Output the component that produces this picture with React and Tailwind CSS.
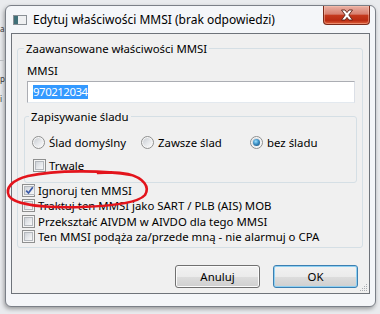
import React from "react";

const CheckBox = ({ checked }) => (
  <span className="w-[13px] h-[13px] shrink-0 border border-[#8e8f8f] bg-[#f4f4f4] p-[1px] flex">
    <span className="flex-1 border border-[#b4b8bd] bg-[linear-gradient(135deg,#cfd3d8_0%,#e9ebee_60%,#f8f8f8_100%)] flex items-center justify-center">
      {checked && (
        <svg width="9" height="9" viewBox="0 0 9 9">
          <path d="M1.2 4.6 L3.5 7 L7.8 1.3" fill="none" stroke="#3b5aa6" strokeWidth="1.7" />
        </svg>
      )}
    </span>
  </span>
);

const Radio = ({ selected }) => (
  <span className="w-[13px] h-[13px] shrink-0 rounded-full border border-[#8e8f8f] bg-[#f6f6f6] p-[1px] flex">
    <span className="flex-1 rounded-full bg-[linear-gradient(135deg,#c9cdd2_0%,#e6e8eb_55%,#fbfbfb_100%)] flex items-center justify-center">
      {selected && (
        <span className="w-[7px] h-[7px] rounded-full bg-[radial-gradient(circle_at_40%_35%,#9be0ff_0%,#3c8fc4_45%,#17466e_100%)]" />
      )}
    </span>
  </span>
);

const Row = ({ children, className = "" }) => (
  <div className={"flex items-center h-[15px] leading-[14px] " + className}>{children}</div>
);

export default function App() {
  return (
    <div className="w-[380px] h-[314px] overflow-hidden relative bg-[#e9ebee] pl-[5px] pt-[5px] font-['Noto_Sans',sans-serif] text-[12px] text-black">
      {/* desktop fragments behind the window */}
      <span className="absolute left-0 top-[25px] text-[8px] leading-[8px] text-[#333]">a</span>
      <span className="absolute left-0 top-[75px] text-[8px] leading-[8px] text-[#333]">p</span>
      <span className="absolute left-0 top-[95px] text-[8px] leading-[8px] text-[#333]">i</span>
      <span className="absolute left-0 top-[60px] w-[5px] h-px bg-[#b9bcc0]" />

      {/* window */}
      <div className="w-[371px] h-[302px] flex flex-col border border-[#7b8088] rounded-[6px] bg-[#f4f6f9] shadow-[-1px_2px_4px_rgba(0,0,0,0.35)]">
        {/* title bar */}
        <div className="h-[27px] flex items-start shrink-0">
          <div className="ml-[7px] mt-[9px] w-[14px] h-[10px] border border-[#8a9096] bg-[#eef0f2] flex">
            <span className="w-[4px] h-full bg-[#3f6f78]" />
          </div>
          <div className="ml-[6px] mt-[6px] leading-[15px] whitespace-nowrap">
            Edytuj właściwości MMSI (brak odpowiedzi)
          </div>
          <div className="ml-auto mr-[5px] w-[47px] h-[19px] rounded-b-[4px] border border-t-0 border-[#7a2a1a] bg-[linear-gradient(#eab0a3_0%,#d88070_45%,#c4391d_52%,#b92b12_80%,#e0603a_100%)] flex items-center justify-center shadow-[inset_0_0_0_1px_rgba(255,200,180,0.45)]">
            <svg width="14" height="12" viewBox="0 0 14 12">
              <path
                d="M1.5 1 H5 L7 3.6 L9 1 H12.5 L8.8 6 L12.5 11 H9 L7 8.4 L5 11 H1.5 L5.2 6 Z"
                fill="#ffffff"
                stroke="#5a1e12"
                strokeWidth="0.9"
              />
            </svg>
          </div>
        </div>

        {/* client area */}
        <div className="mx-[5px] h-[261px] shrink-0 border border-[#6e737a] bg-[#f0f0f0] flex flex-col relative text-[11.4px]">
          <fieldset className="ml-[5px] mt-[7px] w-[346px] border border-[#d5dfe5] rounded-[3px] pb-[3px]">
            <legend className="ml-[6px] px-[2px] leading-[15px]">Zaawansowane właściwości MMSI</legend>
            <div className="ml-[9px] mt-[7px] leading-[15px]">MMSI</div>
            <div className="ml-[9px] mt-[3px] w-[328px] h-[22px] border border-[#abadb3] border-b-[#e3e9ef] border-r-[#dbdfe6] bg-white flex items-center pl-[5px]">
              <span className="bg-[#3399ff] text-white leading-[14px] tracking-[-0.45px]">970212034</span>
            </div>

            <fieldset className="ml-[6px] mt-[6px] w-[333px] border border-[#d5dfe5] rounded-[3px] pb-[9px]">
              <legend className="ml-[4px] px-[2px] leading-[15px]">Zapisywanie śladu</legend>
              <Row className="mt-[11px] pl-[7px]">
                <div className="w-[109px] flex items-center">
                  <Radio />
                  <span className="ml-[4px]">Ślad domyślny</span>
                </div>
                <div className="w-[109px] flex items-center">
                  <Radio />
                  <span className="ml-[4px]">Zawsze ślad</span>
                </div>
                <div className="flex items-center">
                  <Radio selected />
                  <span className="ml-[4px]">bez śladu</span>
                </div>
              </Row>
              <Row className="mt-[8px] pl-[8px]">
                <CheckBox />
                <span className="ml-[3px]">Trwale</span>
              </Row>
            </fieldset>

            <div className="ml-[4px] flex flex-col">
              <Row>
                <CheckBox checked />
                <span className="ml-[3px]">Ignoruj ten MMSI</span>
              </Row>
              <Row>
                <CheckBox />
                <span className="ml-[3px]">Traktuj ten MMSI jako SART / PLB (AIS) MOB</span>
              </Row>
              <Row className="mt-[1px]">
                <CheckBox />
                <span className="ml-[3px]">Przekształć AIVDM w AIVDO dla tego MMSI</span>
              </Row>
              <Row>
                <CheckBox />
                <span className="ml-[3px]">Ten MMSI podąża za/przede mną - nie alarmuj o CPA</span>
              </Row>
            </div>
          </fieldset>

          <div className="mt-[17px] flex justify-end gap-[13px] pr-[11px]">
            <button className="w-[85px] h-[23px] rounded-[3px] border border-[#707070] bg-[linear-gradient(#f2f2f2_0%,#ebebeb_50%,#dddddd_50%,#cfcfcf_100%)] shadow-[inset_0_0_0_1px_#fbfbfb] leading-[15px]">
              Anuluj
            </button>
            <button className="w-[85px] h-[23px] rounded-[3px] border border-[#3c7fb1] bg-[linear-gradient(#f2f2f2_0%,#ebebeb_50%,#dddddd_50%,#cfcfcf_100%)] shadow-[inset_0_0_0_1px_#8fd0f2] leading-[15px]">
              OK
            </button>
          </div>

          {/* size grip */}
          <svg className="absolute right-[1px] bottom-[1px]" width="8" height="8" viewBox="0 0 8 8">
            <g fill="#a9adb2">
              <rect x="6" y="0" width="1" height="1" />
              <rect x="4" y="2" width="1" height="1" />
              <rect x="6" y="2" width="1" height="1" />
              <rect x="2" y="4" width="1" height="1" />
              <rect x="4" y="4" width="1" height="1" />
              <rect x="6" y="4" width="1" height="1" />
              <rect x="0" y="6" width="1" height="1" />
              <rect x="2" y="6" width="1" height="1" />
              <rect x="4" y="6" width="1" height="1" />
              <rect x="6" y="6" width="1" height="1" />
            </g>
          </svg>
        </div>
      </div>

      {/* hand-drawn red circle annotation */}
      <svg className="absolute left-0 top-0 pointer-events-none" width="380" height="314" viewBox="0 0 380 314">
        <path
          d="M131 175 C105 170 55 170 28 176 C12 180 5 188 9 196 C15 205 45 208 82 207 C112 206 138 203 145 195 C150 187 144 178 128 174 C118 172 108 172 98 173"
          fill="none"
          stroke="#e3141c"
          strokeWidth="2.6"
          strokeLinecap="round"
        />
      </svg>
    </div>
  );
}
